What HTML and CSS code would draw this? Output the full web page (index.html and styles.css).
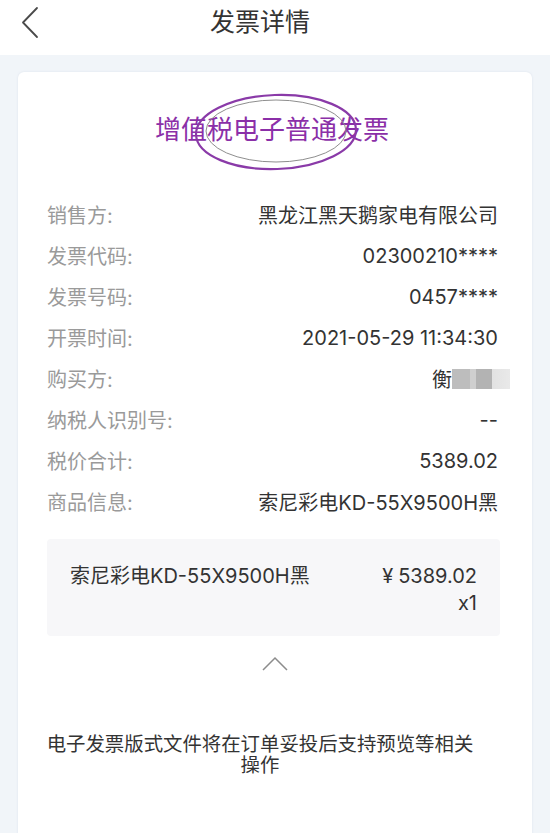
FILE: index.html
```html
<!DOCTYPE html>
<html lang="zh-CN">
<head>
<meta charset="utf-8">
<title>发票详情</title>
<link rel="stylesheet" href="styles.css">
</head>
<body>
<header class="topbar">
  <svg class="back" width="20" height="34" viewBox="0 0 20 34"><path d="M17 2 L3 16.5 L17 31" fill="none" stroke="#4a4a4a" stroke-width="1.8" stroke-linecap="round" stroke-linejoin="round"/></svg>
  <h1 class="title">发票详情</h1>
</header>
<main class="card">
  <div class="invoice-title">
    <span class="name">增值税电子普通发票</span>
    <svg class="stamp" width="170" height="82" viewBox="0 0 170 82"><ellipse cx="85" cy="41" rx="80" ry="37" fill="none" stroke="#8a3aa8" stroke-width="2.2" transform="rotate(-2 85 41)"/><ellipse cx="85" cy="40" rx="70" ry="31" fill="none" stroke="#8e8e8e" stroke-width="1"/></svg>
  </div>
  <div class="rows">
    <div class="row"><span class="label">销售方:</span><span class="value">黑龙江黑天鹅家电有限公司</span></div>
    <div class="row"><span class="label">发票代码:</span><span class="value">02300210****</span></div>
    <div class="row"><span class="label">发票号码:</span><span class="value">0457****</span></div>
    <div class="row"><span class="label">开票时间:</span><span class="value">2021-05-29 11:34:30</span></div>
    <div class="row"><span class="label">购买方:</span><span class="value buyer">衡<span class="blur"></span></span></div>
    <div class="row"><span class="label">纳税人识别号:</span><span class="value">--</span></div>
    <div class="row"><span class="label">税价合计:</span><span class="value">5389.02</span></div>
    <div class="row"><span class="label">商品信息:</span><span class="value">索尼彩电KD-55X9500H黑</span></div>
  </div>
  <div class="item">
    <span class="item-name">索尼彩电KD-55X9500H黑</span>
    <div class="item-price">
      <span><span class="yen">¥</span>5389.02</span>
      <span>x1</span>
    </div>
  </div>
  <div class="toggle">
    <svg width="28" height="16" viewBox="0 0 28 16"><path d="M2 14 L14 2 L26 14" fill="none" stroke="#8c8c8c" stroke-width="1.5"/></svg>
  </div>
  <p class="notice">电子发票版式文件将在订单妥投后支持预览等相关操作</p>
</main>
</body>
</html>
```
FILE: styles.css
```css
html, body {
  margin: 0;
  padding: 0;
}
body {
  width: 550px;
  height: 833px;
  overflow: hidden;
  background: #f1f5f9;
  font-family: Inter, "Noto Sans CJK SC", "Noto Sans", sans-serif;
  color: #333;
}
.topbar {
  height: 55px;
  background: #fff;
  display: flex;
  align-items: center;
}
.back {
  margin-left: 20px;
  margin-top: -10px;
}
.title {
  margin: -12px 0 0 170px;
  font-size: 25px;
  font-weight: 400;
  color: #333;
  line-height: 34px;
}
.card {
  margin: 17px 18px 0;
  height: 780px;
  background: #fff;
  border-radius: 6px;
  box-shadow: 0 0 2px rgba(200, 210, 225, 0.6);
}
.invoice-title {
  position: relative;
  padding-top: 40px;
  text-align: center;
  height: 36px;
}
.name {
  font-size: 26px;
  line-height: 36px;
  color: #8b2fa8;
  display: inline-block;
  margin-left: -6px;
}
.stamp {
  position: absolute;
  left: 173px;
  top: 19px;
}
.rows {
  padding: 46px 34px 0 29px;
}
.row {
  display: flex;
  justify-content: space-between;
  align-items: center;
  height: 41px;
  font-size: 20px;
}
.label {
  color: #9a9a9a;
}
.value {
  color: #333;
}
.buyer {
  display: flex;
  align-items: center;
  margin-right: -12px;
}
.blur {
  display: inline-block;
  width: 58px;
  height: 20px;
  background: linear-gradient(to right, #bdbdbd 0, #bdbdbd 18px, #cfcfcf 18px, #cfcfcf 24px, #b3b3b3 24px, #b3b3b3 40px, #e2e2e2 40px, #e9e9e9 58px);
  filter: blur(0.6px);
}
.item {
  margin: 17px 32px 0 29px;
  height: 97px;
  background: #f7f7f9;
  border-radius: 4px;
  padding: 24px 23px 0;
  box-sizing: border-box;
  display: flex;
  justify-content: space-between;
  align-items: flex-start;
  font-size: 20px;
  line-height: 27px;
}
.item-price {
  display: flex;
  flex-direction: column;
  align-items: flex-end;
}
.yen {
  margin-right: 5px;
}
.toggle {
  padding-top: 20px;
  display: flex;
  justify-content: center;
}
.toggle svg {
  margin-left: -1px;
}
.notice {
  margin: 62px 52px 0 22px;
  text-align: center;
  font-size: 19.4px;
  line-height: 21px;
  color: #333;
}
```
